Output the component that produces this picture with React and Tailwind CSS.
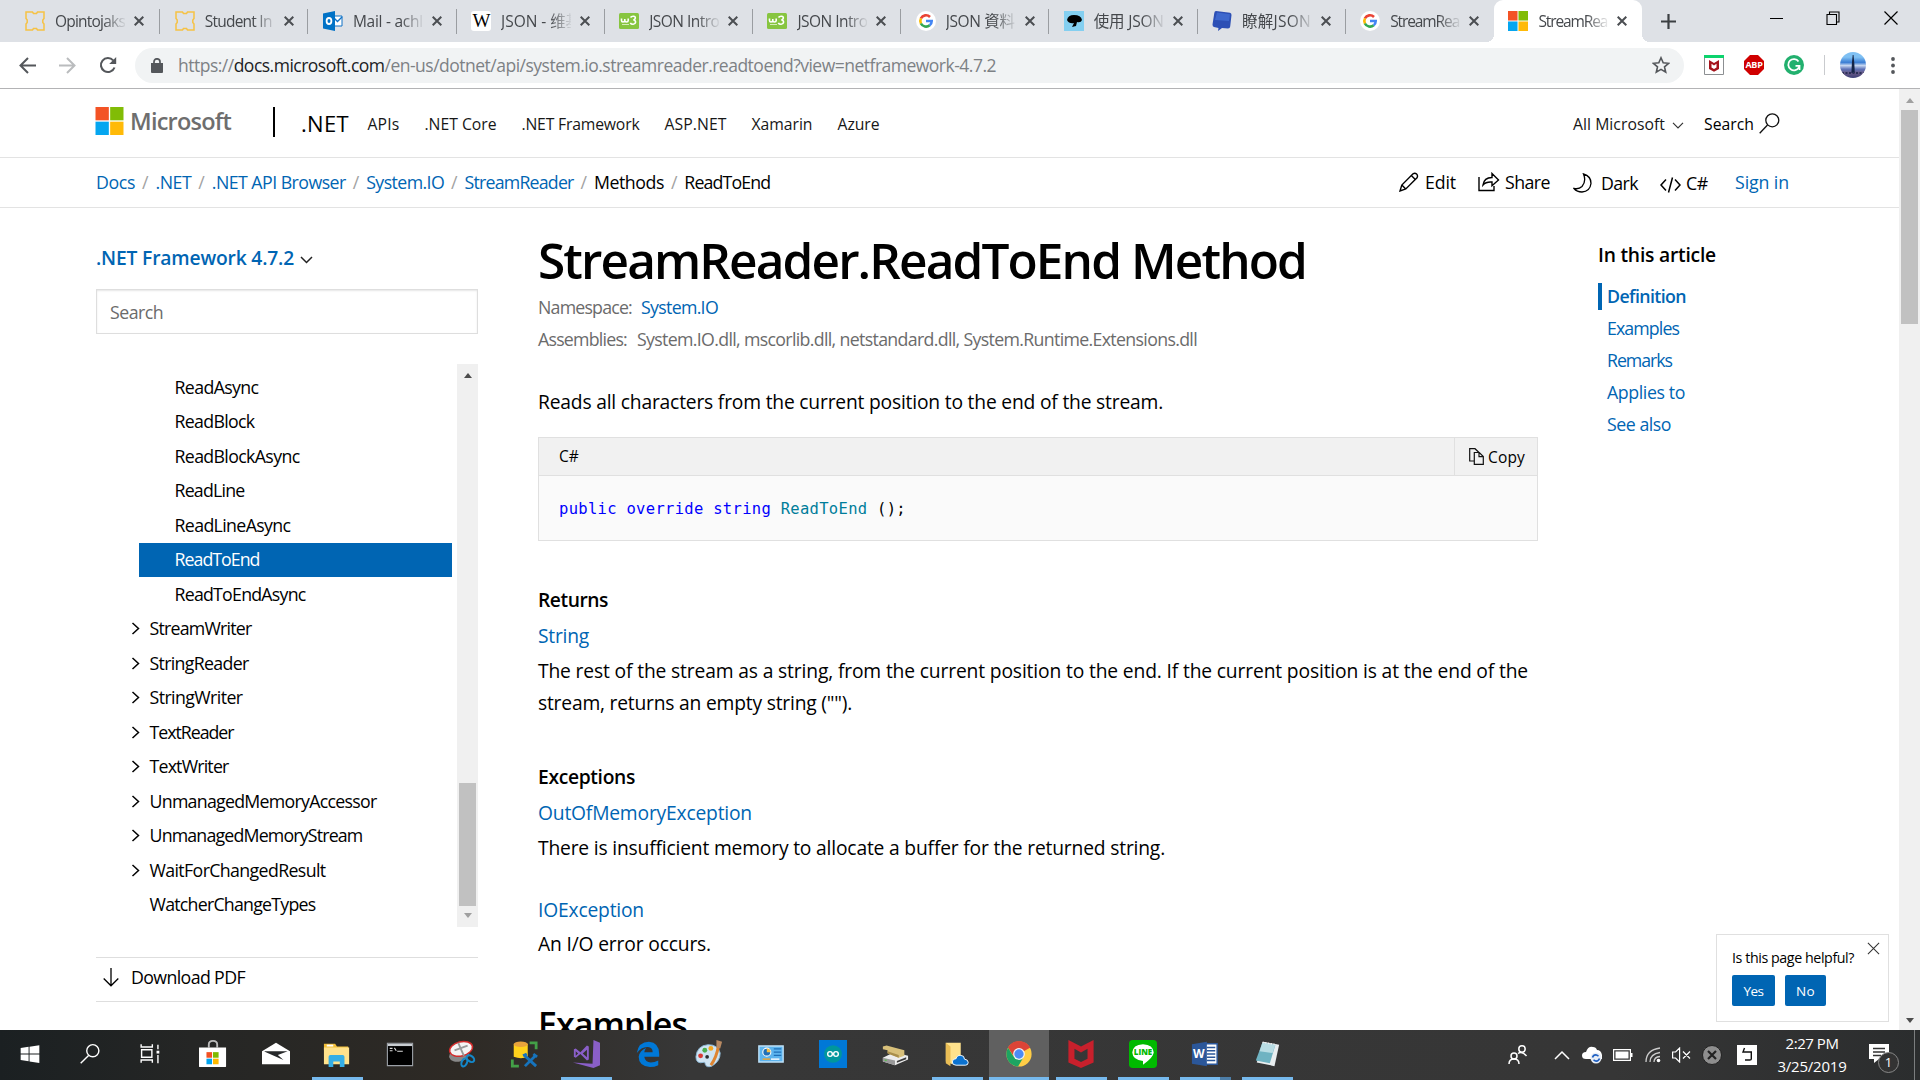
import React, { useLayoutEffect, useRef } from "react";

/* Text run spread evenly over a given width. */
function Fit({ w, className = "", children }) {
  const ref = useRef(null);
  useLayoutEffect(() => {
    const el = ref.current;
    el.style.letterSpacing = "0px";
    const natural = el.getBoundingClientRect().width;
    const n = el.textContent.length;
    el.style.letterSpacing = `${(w - natural) / n}px`;
  }, [w]);
  return (
    <span className={"block shrink-0 whitespace-pre " + className} style={{ width: w }}>
      <span ref={ref} className="inline-block whitespace-pre">{children}</span>
    </span>
  );
}

const Ico = ({ w, h = w, vb, className = "", children }) => (
  <svg width={w} height={h} viewBox={vb || `0 0 ${w} ${h}`} fill="none" className={"block shrink-0 " + className}>
    {children}
  </svg>
);

const MsLogo = ({ s, h = s }) => (
  <Ico w={s} h={h} vb="0 0 21 21" >
    <path fill="#f35325" d="M0 0h10v10H0z" />
    <path fill="#81bc06" d="M11 0h10v10H11z" />
    <path fill="#05a6f0" d="M0 11h10v10H0z" />
    <path fill="#ffba08" d="M11 11h10v10H11z" />
  </Ico>
);

const Puzzle = () => (
  <Ico w={20}>
    <path stroke="#f6c244" strokeWidth="1.5" d="M1 1h6.500l1 1.500h3l1-1.500H19v6.500L17.800 9v2.500l1.200 1.500V19h-6.500l-1-1.500h-3L7.500 19H1v-6l1.200-1.500V9L1 7.500z" />
  </Ico>
);
const Outlook = () => (
  <Ico w={20}>
    <path fill="#fff" stroke="#1072c6" d="M10 5h9v10h-9z" />
    <path stroke="#1072c6" strokeWidth="1.4" d="M11 7l3.5 3.5L19 6" />
    <path fill="#0072c6" d="M0 2.5L12 0v20L0 17.5z" />
    <ellipse cx="6" cy="10" rx="2.4" ry="3" stroke="#fff" strokeWidth="1.8" />
  </Ico>
);
const Wiki = () => (
  <span className="flex size-5 items-center justify-center rounded-[3px] bg-white font-[Liberation_Serif,serif] text-[19px] leading-5 tracking-tighter text-black">W</span>
);
const W3 = () => (
  <Ico w={20}>
    <rect y="2" width="20" height="16" rx="1.5" fill="#87c540" />
    <path stroke="#fff" strokeWidth="1.6" d="M2.5 7.5v2q0 1.5 1.5 1.5t1.8-1.5V8v1.5q0 1.500 1.700 1.500T9.200 9.500v-2M11.500 6.500q1-1.500 3-1.300t1.800 2q-.2 1.500-2 1.800q2.200 0 2.300 2.200q-.3 2-2.400 2.100t-2.900-1.500" />
    <path stroke="#d5ecb8" d="M3 13.500h7" />
  </Ico>
);
const Google = () => (
  <Ico w={20} h={20} vb="0 0 20 20">
    <circle cx="10" cy="10" r="10" fill="#fff" />
    <path stroke="#ea4335" strokeWidth="2.600" d="M4.900 7.400A5.700 5.700 0 0 1 14 6" />
    <path stroke="#fbbc05" strokeWidth="2.600" d="M5 12.700a5.700 5.700 0 0 1 0-5.400" />
    <path stroke="#34a853" strokeWidth="2.600" d="M13.700 14.300A5.700 5.700 0 0 1 4.900 12.500" />
    <path stroke="#4285f4" strokeWidth="2.600" d="M10 10h5.700q0 2.800-2 4.300" />
  </Ico>
);
const Bonsai = () => (
  <Ico w={20}>
    <path fill="#84cff0" d="M0 0h20v20H0z" />
    <path fill="#000" d="M3 9q1-5 7-5 7 0 8 5-1 3-5 2l-1 4-4 1 2-4q-5 1-7-3z" />
  </Ico>
);
const BlueCube = () => (
  <Ico w={20}>
    <path fill="#2c4fb5" d="M4 0q-1.500 0-1.700 2L.5 13.500q0 2 1.500 2.500l4.500 1L6 20l4-3 6 .500q2 0 2.200-2L19.500 4q0-2-1.500-2.300z" />
    <path fill="#4a78dd" d="M5 1.500l13 1.700L17 10 3 9z" opacity=".6" />
  </Ico>
);

const TABS = [
  [Puzzle, "Opintojaks", 70],
  [Puzzle, "Student In", 67],
  [Outlook, "Mail - achl", 70],
  [Wiki, "JSON - 维基", 80],
  [W3, "JSON Intro", 70],
  [W3, "JSON Intro", 70],
  [Google, "JSON 資料", 69],
  [Bonsai, "使用 JSON", 70],
  [BlueCube, "瞭解JSON", 69],
  [Google, "StreamRea", 69],
  [MsTab, "StreamRea", 69],
];
function MsTab() { return <MsLogo s={20} />; }

const X = ({ s = 10, c = "#4b4e52", sw = 2 }) => (
  <Ico w={s} vb="0 0 10 10"><path stroke={c} strokeWidth={sw} d="M.7.700l8.600 8.600M9.300.700L.7 9.300" /></Ico>
);

function TabStrip() {
  return (
    <div className="flex h-[42px] bg-[#dee1e6] pl-3">
      {TABS.map(([I, label, w], i) => {
        const active = i === 10;
        return (
          <div key={i} className={"relative flex h-[42px] w-[148.2px] shrink-0 items-center " + (i === 0 ? "pl-[13px] " : "pl-[14.500px] ") + (active ? "rounded-t-[9px] bg-white" : "")}>
            {active && (
              <>
                <span className="absolute bottom-0 -left-2 size-2 bg-[radial-gradient(circle_at_0_0,#dee1e6_8px,#fff_8px)]" />
                <span className="absolute bottom-0 -right-2 size-2 bg-[radial-gradient(circle_at_100%_0,#dee1e6_8px,#fff_8px)]" />
              </>
            )}
            <I />
            <div className="ml-[10px] w-[70px] overflow-hidden text-[15.500px] leading-5 text-[#45484c] [mask-image:linear-gradient(to_right,#000_48px,transparent_72px)]">
              <Fit w={w}>{label}</Fit>
            </div>
            <span className="ml-[9px]"><X /></span>
            {i < 9 && <span className="absolute top-[9px] right-0 h-[25px] w-px bg-[#9a9da1]" />}
          </div>
        );
      })}
      <div className="ml-[19px] flex h-[42px] items-center">
        <Ico w={15}><path stroke="#3c4043" strokeWidth="2.200" d="M7.500 0v15M0 7.500h15" /></Ico>
      </div>
      <div className="ml-auto flex h-9 items-center pr-[22px]">
        <span className="h-px w-[13px] bg-black" />
        <Ico w={14} className="ml-[43px]"><path stroke="#000" strokeWidth="1.100" d="M1 3.500h9.500v10H1zM3.500 3.500V1H13v10h-2.500" /></Ico>
        <Ico w={14} className="ml-[44px]"><path stroke="#000" strokeWidth="1.200" d="M.5.500l13 13M13.500.500l-13 13" /></Ico>
      </div>
    </div>
  );
}

function Toolbar() {
  return (
    <div className="flex h-[47px] items-center border-b border-[#b3b3b5] bg-white pl-[19px]">
      <Ico w={17}><path stroke="#54575b" strokeWidth="2" d="M17 8.500H2M9 1L1.500 8.500 9 16" /></Ico>
      <Ico w={17} className="ml-[23px]"><path stroke="#babcbe" strokeWidth="2" d="M0 8.500h15M8 1l7.500 7.500L8 16" /></Ico>
      <Ico w={18} className="ml-[23px]">
        <path stroke="#54575b" strokeWidth="2.100" d="M15.500 11.500A7 7 0 1 1 14.200 4.400" />
        <path fill="#54575b" d="M17.200 1v7h-7z" />
      </Ico>
      <div className="ml-[18px] flex h-[35px] w-[1549px] items-center rounded-full bg-[#f1f3f4] pl-[16px]">
        <Ico w={12} h={15}>
          <path fill="#54575b" d="M0 5h12v9q0 1-1 1H1q-1 0-1-1z" />
          <path stroke="#54575b" strokeWidth="1.700" d="M3 6V3.800a3 3 0 0 1 6 0V6" />
        </Ico>
        <Fit w={818} className="ml-[15px] text-[17.500px] leading-[34px] text-[#7d8185]">
          https://<span className="text-[#202124]">docs.microsoft.com</span>/en-us/dotnet/api/system.io.streamreader.readtoend?view=netframework-4.7.2
        </Fit>
        <Ico w={18} className="ml-auto mr-[14px]" vb="0 0 18 18">
          <path stroke="#54575b" strokeWidth="1.600" d="M9 1.800l2.200 5 5.400.5-4.100 3.600 1.200 5.300L9 13.400l-4.700 2.800 1.200-5.300L1.400 7.300l5.400-.5z" />
        </Ico>
      </div>
      <Ico w={20} className="ml-5">
        <path fill="#fff" stroke="#8c8f92" d="M.5 1v18.500h19V1z" />
        <path fill="#0cd36d" d="M0 0h20v3H0z" />
        <path fill="#a5131c" d="M5 5l5 3 5-3v9l-5 2.800L5 14zm2.500 3.800v3.800l2.500 1.500 2.500-1.500V8.800L10 10.400z" />
      </Ico>
      <div className="ml-5 flex size-5 items-center justify-center bg-[#d00000] [clip-path:polygon(30%_0,70%_0,100%_30%,100%_70%,70%_100%,30%_100%,0_70%,0_30%)]">
        <span className="text-[9px] font-bold leading-5 tracking-tight text-white">ABP</span>
      </div>
      <Ico w={20} className="ml-5">
        <circle cx="10" cy="10" r="10" fill="#22b06e" />
        <path stroke="#fff" strokeWidth="1.800" d="M14.500 6.500A5.600 5.600 0 1 0 15 12M15.500 15v-4.200h-4" />
      </Ico>
      <span className="ml-5 h-5 w-px bg-[#c9cbce]" />
      <div className="ml-[15px] size-[26px] overflow-hidden rounded-full bg-[linear-gradient(#7fc0f3_0_20%,#3a7dd4_40%,#c6d6f0_52%,#5d72b8_66%,#6a5a86_80%,#3b3f78)]">
        <Ico w={26}><path fill="#142447" d="M12.700 3h.8l.8 8 .5 10h-3.400l.5-10z" /><path stroke="#2b3158" strokeWidth="2" strokeDasharray="2 1.500" d="M2 21h22" /></Ico>
      </div>
      <Ico w={4} h={17} className="ml-[25px]"><g fill="#54575b"><circle cx="2" cy="2" r="1.900" /><circle cx="2" cy="8.500" r="1.900" /><circle cx="2" cy="15" r="1.900" /></g></Ico>
    </div>
  );
}

const NAV = [["APIs", 32], [".NET Core", 72], [".NET Framework", 118], ["ASP.NET", 62], ["Xamarin", 61], ["Azure", 42]];

function SiteHeader() {
  return (
    <div className="flex h-[69px] border-b border-[#e3e3e3] pl-[95px] text-[15.750px] leading-[70px] text-[#171717]">
      <div className="mt-[18px] flex h-7">
        <MsLogo s={29} h={28} />
        <Fit w={101} className="ml-[6px] text-[23.500px] font-semibold leading-[28px] text-[#6e6e6e]">Microsoft</Fit>
        <span className="ml-[42px] h-[30px] w-[2px] bg-black" />
      </div>
      <Fit w={48} className="ml-[26px] text-[22px] font-medium leading-[68px] text-black">.NET</Fit>
      <div className="ml-[18.500px] flex gap-[25px]">
        {NAV.map(([t, w]) => <Fit key={t} w={w}>{t}</Fit>)}
      </div>
      <div className="ml-auto flex w-[326px]">
        <Fit w={92}>All Microsoft</Fit>
        <Ico w={12} h={7} className="mt-[33px] ml-[7px]"><path stroke="#333" strokeWidth="1.200" d="M1 .800l5 5 5-5" /></Ico>
        <Fit w={50} className="ml-[20px] text-black">Search</Fit>
        <Ico w={21} className="mt-[24px] ml-[5px]"><circle cx="13.300" cy="7.300" r="6.500" stroke="#111" strokeWidth="1.300" /><path stroke="#111" strokeWidth="1.300" d="M8.500 12L.7 20.300" /></Ico>
      </div>
    </div>
  );
}

const CRUMBS = [["Docs", 39], [".NET", 36], [".NET API Browser", 134], ["System.IO", 78], ["StreamReader", 109], ["Methods", 70], ["ReadToEnd", 86]];

function Crumbs() {
  return (
    <div className="flex h-[50px] border-b border-[#e3e3e3] pl-[96px] text-[17.750px] leading-[48px] text-black">
      {CRUMBS.map(([t, w], i) => (
        <React.Fragment key={t}>
          {i > 0 && <span className="w-[20.4px] text-center text-[#a2a2a2]">/</span>}
          <Fit w={w} className={i < 5 ? "text-[#0065b3]" : ""}>{t}</Fit>
        </React.Fragment>
      ))}
      <div className="ml-auto flex w-[500px]">
        <Ico w={20} className="mt-[14px]" vb="0 0 20 20"><path stroke="#000" strokeWidth="1.400" d="M1 19l1.800-6L14 1.800q2-1.300 3.600.3t.4 3.700L6.800 17zM2.800 13l4 4M12.300 3.500l4 4" /></Ico>
        <Fit w={31} className="ml-[6px]">Edit</Fit>
        <Ico w={22} h={20} className="mt-[14px] ml-[22px]"><path stroke="#000" strokeWidth="1.400" d="M1 5v13.500h15V14M5 13q1-7.500 9-7.500V1.500L20.500 8 14 13.800V10q-6-.5-9 3z" /></Ico>
        <Fit w={45} className="ml-[5px]">Share</Fit>
        <Ico w={19} h={20} className="mt-[15px] ml-[23px]"><path stroke="#000" strokeWidth="1.300" d="M10.500 1q7.500 2 7.500 9.500-1 8-9 8.500-5 0-8-3.500 5 1 8-2 4.500-5 1.500-12.500z" /></Ico>
        <Fit w={37} className="ml-[9px] leading-[50px]">Dark</Fit>
        <Ico w={21} h={16} className="mt-[19px] ml-[22px]"><path stroke="#000" strokeWidth="1.500" d="M6 2.500L1 8l5 5.500M15 2.500L20 8l-5 5.500M12.500.500l-4 15" /></Ico>
        <Fit w={22} className="ml-[5px] leading-[51px]">C#</Fit>
        <Fit w={54} className="ml-[27px] text-[#0065b3]">Sign in</Fit>
      </div>
    </div>
  );
}

const MEMBERS = [["ReadAsync", 84], ["ReadBlock", 80], ["ReadBlockAsync", 125], ["ReadLine", 70], ["ReadLineAsync", 116], ["ReadToEnd", 85], ["ReadToEndAsync", 131]];
const TYPES = [["StreamWriter", 102], ["StringReader", 99], ["StringWriter", 93], ["TextReader", 84], ["TextWriter", 79], ["UnmanagedMemoryAccessor", 227], ["UnmanagedMemoryStream", 213], ["WaitForChangedResult", 176], ["WatcherChangeTypes", 166]];

function Sidebar() {
  return (
    <div className="w-[382px] shrink-0 text-[17.750px]">
      <div className="mt-[34px] flex h-8 leading-8">
        <Fit w={198} className="text-[19.250px] font-semibold text-[#0065b3]">.NET Framework 4.7.2</Fit>
        <Ico w={13} h={8} className="mt-[14px] ml-[6px]"><path stroke="#222" strokeWidth="1.500" d="M1 1l5.500 5.500L12 1" /></Ico>
      </div>
      <div className="mt-[15px] flex h-[45px] items-center border border-[#dedede] pt-[2px] pl-[13px] text-[#6b6b6b] shadow-[inset_0_1px_2px_rgba(10,10,10,0.1)]">
        <Fit w={53}>Search</Fit>
      </div>
      <div className="mt-[30px] flex h-[563px]">
        <div className="flex-1 pt-[6px] text-black">
          {MEMBERS.map(([t, w], i) => (
            <div key={t} className={"mr-[5px] ml-[43px] flex h-[34.500px] items-center pl-[35.500px] " + (i === 5 ? "bg-[#0065b3] text-white" : "")}>
              <Fit w={w}>{t}</Fit>
            </div>
          ))}
          {TYPES.map(([t, w], i) => (
            <div key={t} className="flex h-[34.500px] items-center pl-[35px]">
              {i < 8 ? <Ico w={9} h={13}><path stroke="#000" strokeWidth="1.500" d="M1.500 1l6 5.500-6 5.500" /></Ico> : <span className="w-[9px]" />}
              <Fit w={w} className="ml-[9.500px]">{t}</Fit>
            </div>
          ))}
        </div>
        <div className="flex w-[21px] flex-col items-center bg-[#f0f0f0]">
          <span className="mt-[9px] border-x-[4.500px] border-b-[5px] border-x-transparent border-b-[#4d4d4d]" />
          <span className="mt-[405px] h-[123px] w-[17px] bg-[#c1c1c1]" />
          <span className="mt-[7px] border-x-[4.500px] border-t-[5px] border-x-transparent border-t-[#a0a0a0]" />
        </div>
      </div>
      <div className="mt-[30px] flex h-[45px] border-y border-[#dedede] pl-[7px] leading-[39px] text-black">
        <Ico w={16} h={19} className="mt-[10px]"><path stroke="#000" strokeWidth="1.300" d="M8 0v17.500M.7 10.500L8 17.800l7.300-7.300" /></Ico>
        <Fit w={114} className="ml-[12px]">Download PDF</Fit>
      </div>
    </div>
  );
}

function Article() {
  return (
    <div className="ml-[60px] w-[1000px] shrink-0 text-[19.250px] leading-8 text-black">
      <Fit w={768} className="mt-5 h-[63px] text-[49.500px] font-semibold leading-[64px]">StreamReader.ReadToEnd Method</Fit>
      <div className="flex h-8 text-[17.750px] text-[#6b6b6b]">
        <Fit w={94}>Namespace:</Fit>
        <Fit w={77} className="ml-[9px] text-[#0065b3]">System.IO</Fit>
      </div>
      <div className="flex h-8 text-[17.750px] text-[#6b6b6b]">
        <Fit w={89}>Assemblies:</Fit>
        <Fit w={560} className="ml-[10px]">System.IO.dll, mscorlib.dll, netstandard.dll, System.Runtime.Extensions.dll</Fit>
      </div>
      <Fit w={625} className="mt-[31px]">Reads all characters from the current position to the end of the stream.</Fit>
      <div className="mt-[19px] h-[104px] border border-[#e0e0e0] bg-[#fafafa]">
        <div className="flex h-[38px] border-b border-[#e0e0e0] bg-[#f1f1f1] pl-[20px] text-[15.500px] leading-[37px]">
          <Fit w={20}>C#</Fit>
          <div className="ml-auto flex w-[83px] border-l border-[#e0e0e0] pl-[14px]">
            <Ico w={15} h={17} className="mt-[10px]"><path stroke="#111" strokeWidth="1.200" d="M5 13H.700V.700H6L10 4.500M5.300 4.500h5l4 4v7.800h-9zM10 4.700v4h4" /></Ico>
            <Fit w={37} className="ml-[4px] leading-[38px]">Copy</Fit>
          </div>
        </div>
        <Fit w={347} className="pt-[17px] pl-[20px] font-['DejaVu_Sans_Mono',monospace] text-[15.500px] leading-8">
          <span className="text-[#0101fd]">public</span> <span className="text-[#0101fd]">override</span> <span className="text-[#0101fd]">string</span> <span className="text-[#007d9a]">ReadToEnd</span> ();
        </Fit>
      </div>
      <Fit w={70} className="mt-[43px] font-semibold">Returns</Fit>
      <Fit w={51} className="mt-1 text-[#0065b3]">String</Fit>
      <Fit w={990} className="mt-[3px]">The rest of the stream as a string, from the current position to the end. If the current position is at the end of the</Fit>
      <Fit w={314}>stream, returns an empty string ("").</Fit>
      <Fit w={97} className="mt-[42px] font-semibold">Exceptions</Fit>
      <Fit w={214} className="mt-1 text-[#0065b3]">OutOfMemoryException</Fit>
      <Fit w={627} className="mt-[3px]">There is insufficient memory to allocate a buffer for the returned string.</Fit>
      <Fit w={106} className="mt-[30px] text-[#0065b3]">IOException</Fit>
      <Fit w={173} className="mt-[2px]">An I/O error occurs.</Fit>
      <Fit w={149} className="mt-[42px] text-[34px] font-semibold leading-[44px]">Examples</Fit>
    </div>
  );
}

const TOC = [["Definition", 79], ["Examples", 72], ["Remarks", 65], ["Applies to", 78], ["See also", 64]];

function Toc() {
  return (
    <div className="ml-[60px] pt-[31px] text-[17.750px]">
      <Fit w={118} className="text-[19.250px] font-semibold leading-8 text-black">In this article</Fit>
      <div className="mt-[9px] text-[#0065b3]">
        {TOC.map(([t, w], i) => (
          <div key={t} className="flex h-8 items-center">
            <span className={"h-[27px] w-1 " + (i === 0 ? "bg-[#0065b3]" : "")} />
            <Fit w={w} className={"ml-[5px] leading-8 " + (i === 0 ? "font-semibold" : "")}>{t}</Fit>
          </div>
        ))}
      </div>
    </div>
  );
}

function Helpful() {
  return (
    <div className="absolute right-[10px] bottom-[8px] h-[88px] w-[173px] border border-[#e0e0e0] bg-white pl-[15px] text-[14.250px] text-black">
      <span className="absolute top-[7px] right-2"><X s={13} c="#333" sw={0.8} /></span>
      <Fit w={122} className="mt-[11px] leading-[24px]">Is this page helpful?</Fit>
      <div className="mt-[5px] flex gap-[10px] text-[13.500px] leading-[32px] text-white">
        <span className="flex h-[31px] w-[43px] justify-center rounded-[2px] bg-[#0065b3]"><Fit w={20}>Yes</Fit></span>
        <span className="flex h-[31px] w-[41px] justify-center rounded-[2px] bg-[#0065b3]"><Fit w={19}>No</Fit></span>
      </div>
    </div>
  );
}

/* Task bar programs: running state and a drawing on a 30 x 30 box. */
const APPS = [
  ["", <path fill="#fff" d="M5 8.500l8.500-1.200v7.200H5zM14.500 7.100L25 5.500v9H14.500zM5 15.500h8.500v7.200L5 21.500zM14.500 15.500H25v9.200l-10.500-1.600z" />],
  ["", <g stroke="#fff" strokeWidth="1.500"><circle cx="18" cy="11.500" r="6.500" /><path d="M13.500 16.500L5 25" /></g>],
  ["", <g stroke="#fff" strokeWidth="1.500"><path d="M5.500 4.500v3h12v-3M5.500 24.500v-3h12v3M6 10.500h11v8H6zM23.500 5v5M23.500 16v9" /><path fill="#fff" strokeWidth="0" d="M22 11.500h3v3h-3z" /></g>],
  ["", <g><path stroke="#bbb" strokeWidth="2" d="M10.500 8V5q0-4 4.500-4t4.500 4v3" /><path fill="#fff" d="M0 8h29v20q0 1-1 1H1q-1 0-1-1z" /><path fill="#f25022" d="M8 13h6v6H8z" /><path fill="#7fba00" d="M15 13h6v6h-6z" /><path fill="#00a4ef" d="M8 20h6v6H8z" /><path fill="#ffb900" d="M15 20h6v6h-6z" /></g>],
  ["", <g><path fill="#fff" d="M0 12L15 3l15 9v14H0z" /><path fill="#26282a" d="M2.500 12h25L17 16l6 5.500L3 12.500z" /></g>],
  ["run", <g><path fill="#f3bf38" d="M1 4h12l2 3h12v4H1z" /><path fill="#fff" d="M4 5h7v2H4z" /><path fill="#ffe28c" d="M1 8h27v18H1z" /><path fill="#35aee6" d="M6 18q0-2 2-2h13q2 0 2 2v11h-5v-6h-7v6H6z" /></g>],
  ["", <g><path fill="#000" stroke="#9ba0a6" strokeWidth="1.200" d="M1.500 3.500h27v24h-27z" /><path fill="#c8ccd0" d="M2 4h26v2.500H2z" /><path stroke="#ddd" strokeWidth="1.200" d="M4 9h3M4 11.500h3M9 8.500l2 3M12 12h6" /></g>],
  ["", <g><ellipse cx="12" cy="16" rx="11" ry="7" fill="#888" transform="rotate(-15 12 16)" /><ellipse cx="14" cy="9.500" rx="12.500" ry="7.500" fill="#f4f4f4" stroke="#d22b2b" strokeWidth="1.600" transform="rotate(-14 14 9.500)" /><path stroke="#999" strokeWidth="2" d="M11 3l6 14M7 11l14-5" /><g stroke="#1487c9" strokeWidth="2.200"><ellipse cx="24" cy="20" rx="4.500" ry="3" transform="rotate(35 24 20)" /><ellipse cx="17.500" cy="24" rx="2.800" ry="4.500" transform="rotate(25 17.500 24)" /></g></g>],
  ["", <g><path fill="#ffd21c" d="M4 4h15v14q-7 3-15 0z" /><ellipse cx="11.500" cy="4.500" rx="7.500" ry="3" fill="#e8a33c" /><path stroke="#43a047" strokeWidth="3" d="M21 3h7v7M2.500 21v7h7" /><path stroke="#1774bd" strokeWidth="3" d="M16 28l12-12M16 17l12 11M14 17l4-2M25 15l4 3" /></g>],
  ["run", <g fill="#8a5fc8"><path d="M23 0l7 3v24l-7 3L1 24l21 1.500z" /><path d="M2 10l2-1 5 4 7-7 2 1v14l-2 1-7-7-5 4-2-1zm2 2v5l2.500-2.500zm12-1.500L11.500 14.500 16 18.500z" fillRule="evenodd" /></g>],
  ["", <path fill="#0078d7" d="M3 14Q5 2 16 2q11 1 11 13v3H11q1 6 7 6 4 0 8-2v5q-4 2-9 2Q5 28 5 18q1-7 8-9.500Q11 11 11 13h9q0-5-5-5.500Q8 7 3 14z" />],
  ["", <g><path fill="#cfe4f3" stroke="#8db8d6" d="M1 18Q2 6 14 5q11 0 13 9 0 9-9 14-6 2-7-2 0-3-2-2-8 2-8-6z" /><circle cx="6" cy="17" r="2.600" fill="#d83a34" /><circle cx="10.500" cy="11" r="2.600" fill="#4cae4f" /><circle cx="17" cy="9" r="2.600" fill="#f6a821" /><circle cx="13" cy="18" r="2" fill="#2b2f33" /><path stroke="#de8532" strokeWidth="3.200" d="M25 7q-2 12-8 20" /><path fill="#b98a62" d="M23 0l6 2-2 7-4-1z" /></g>],
  ["", <g><path fill="#5cb4ee" stroke="#bfe2fa" strokeWidth="1.500" d="M2 6.500h26v17H2z" /><circle cx="10.500" cy="13" r="4.300" fill="#1f6fb8" stroke="#fff" strokeWidth="1.200" /><path fill="#f6c04a" d="M10.500 13V9a4 4 0 0 1 4 4z" /><path stroke="#1f6fb8" strokeWidth="1.500" d="M18 9.500h8M18 13h8M18 16.500h8" /><path stroke="#f3a52c" strokeWidth="1.500" d="M6 20.500h8" /><path stroke="#fff" strokeWidth="1.500" d="M15 20.500h9" /></g>],
  ["", <g><path fill="#0078d7" d="M-1 -1h32v32H-1z" /><circle cx="15" cy="15" r="9.500" fill="#00979d" /><g stroke="#fff" strokeWidth="1.500"><circle cx="11.800" cy="15" r="2.500" /><circle cx="18.200" cy="15" r="2.500" /></g></g>],
  ["", <g><path fill="#ededed" d="M2 19l12-6 15 4v4l-14 6-13-4z" /><path fill="#9a9a9a" d="M2 19l13 3v5L2 23z" /><path fill="#3b3b3b" d="M17 22.500l10-4v2l-10 4z" /><path fill="#58c24f" d="M4 21h2v1.500H4z" /><path fill="#d8c07a" d="M2 7l4-1 19 5v6l-6 2L7 14V11L2 10z" /><path fill="#a98e4b" d="M7 12l12 4v3L7 14.500z" /></g>],
  ["run", <g><path fill="#ffe28c" d="M3 3h16v20l-9 3-7-3z" /><path fill="#e9bd55" d="M3 3l5 4v21l-5-3z" /><path fill="#0b72d0" stroke="#fff" strokeWidth="1" d="M14 27q-4 0-4-3.500t4-3.500q1-4 5-3.500 4 0 4 4 4 .500 4 3.500t-3 3z" /></g>],
  ["active", <g><circle cx="15" cy="15" r="13.500" fill="#ffcd46" /><path fill="#dc4437" d="M15 15L3.300 8.200A13.500 13.500 0 0 1 26.700 8.200z" /><path fill="#dc4437" d="M15 8.500h12a13.500 13.500 0 0 0-23.700-.3l6 9z" /><path fill="#1da462" d="M3.300 8.200A13.500 13.500 0 0 0 14 28.500L19.500 19 9 17.500z" /><circle cx="15" cy="15" r="6.300" fill="#f4f4f4" /><circle cx="15" cy="15" r="5" fill="#4c8bf5" /></g>],
  ["run", <path fill="#c8202c" d="M1.500 0L15 7 28.500 0v24L15 30 1.500 24zM8 9.500V20l7 3.500 7-3.500V9.500l-7 4z" fillRule="evenodd" />],
  ["run", <g><rect width="30" height="30" rx="4" fill="#00b900" /><path fill="#fff" d="M15 4.500q11 .500 11.500 9Q26 19 15 26.500v-4Q4 21.500 3.500 13.500 4 5 15 4.500z" /></g>],
  ["word", <g><path fill="#fff" stroke="#2b579a" strokeWidth="1.500" d="M15 4h13v22H15z" /><path stroke="#2b579a" strokeWidth="1.600" d="M17 8h9M17 11.500h9M17 15h9M17 18.500h9M17 22h9" /><path fill="#2b579a" d="M1 4.500L17 2v26L1 25.500z" /></g>],
  ["run", <g><path fill="#e9eef0" d="M11 2l17 3-5 23-19-4z" /><path fill="#6fb3c2" d="M10 3l14 2-6 20-15-3z" /><path fill="#b9dde4" d="M10 3l14 2-3 9L7 12z" /><path stroke="#eee" strokeWidth="1.500" strokeDasharray="1.500 1.500" d="M10 2.500l15 2.500" /></g>],
];
const WIDTHS = [60, 60, 60, 66.5, 59, 63.5, 61, 63, 62, 62, 61, 62, 62, 62, 62, 62, 62, 62, 62, 62, 62];

function TaskBar() {
  return (
    <div className="flex h-[50px] bg-[linear-gradient(to_right,#1b2022_0,#252625_10%,#2e2a25_24%,#373737_36%,#363636_84%,#2b2d2e_100%)]">
      {APPS.map(([state, art], i) => (
        <div key={i} className="flex h-[50px] flex-col items-center justify-between" style={{ width: WIDTHS[i] }}>
          <div className={"flex h-[47px] items-center justify-center pt-[1px] " + (state === "active" ? "w-[60px] bg-[#606060]" : "w-[51px]")}>
            <div className="relative">
              <Ico w={28} vb="0 0 30 30">{art}</Ico>
              {i === 18 && <span className="absolute inset-0 top-[-2px] text-center text-[8px] font-extrabold leading-[28px] text-[#00b900]">LINE</span>}
              {i === 19 && <span className="absolute top-0 left-[2px] text-[12px] font-bold leading-[28px] text-white">W</span>}
            </div>
          </div>
          {state && (
            <div className={"flex h-[3px] justify-end bg-[#76b9ed] " + (state === "active" ? "w-[60px]" : "w-[51px]")}>
              {state === "word" && <span className="w-[11px] bg-[#4d7ea8]" />}
            </div>
          )}
        </div>
      ))}
      <div className="ml-auto flex items-center text-white">
        <Ico w={20}><g stroke="#fff" strokeWidth="1.500"><circle cx="14" cy="4" r="3.200" /><circle cx="6" cy="11" r="3" /><path d="M1 19q0-5 5-5t5 5M10 8.500q4-3 8.500 2.500" /></g></Ico>
        <Ico w={16} h={10} className="ml-[26px]"><path stroke="#fff" strokeWidth="1.500" d="M1 9l7-7 7 7" /></Ico>
        <Ico w={21} h={18} className="ml-[12px]"><path fill="#fff" d="M4 13q-4 0-4-3.500T4 6q2-6 7-5 3 0 4 3 4 0 5 5v4z" /><circle cx="14" cy="12" r="5.500" fill="#e8eef6" /><path stroke="#1e5fc2" strokeWidth="1.600" d="M10.500 11.500q1-3 4-2.500l2 1M17.500 12.500q-1 3-4 2.500l-2-1" /></Ico>
        <Ico w={20} h={12} className="ml-[10px]"><path stroke="#fff" strokeWidth="1.200" d="M.600.600h16.800v10.800H.600z" /><path fill="#fff" d="M2.500 2.500h13v7h-13zM18 4h1.500v4H18z" /></Ico>
        <Ico w={17} h={16} className="ml-[12px]"><g stroke="#ccc" strokeWidth="1.300"><path d="M1 15Q1 3 15 1M5 15Q5 7 15 5.500M9 15q0-5 6-5.500" /></g><circle cx="13.500" cy="13.500" r="1.800" fill="#fff" /></Ico>
        <Ico w={19} h={16} className="ml-[10px]"><path stroke="#fff" strokeWidth="1.200" d="M.600 5h3l4-4v14l-4-4h-3zM11 4.500l7 7M18 4.500l-7 7" /></Ico>
        <Ico w={20} className="ml-[11px]"><circle cx="10" cy="10" r="9.500" fill="#8e8e8e" stroke="#222" /><path stroke="#222" strokeWidth="2.200" d="M6 6l8 8M14 6l-8 8" /></Ico>
        <Ico w={20} className="ml-[15px]"><path fill="#fff" d="M0 0h20v20H0z" /><path stroke="#111" strokeWidth="1.400" d="M7.500 3L6 7h8.300v7q0 1-1.500 1H8" /></Ico>
        <div className="ml-[20px] flex w-[70px] flex-col items-center text-[15px] leading-[23px]">
          <Fit w={53}>2:27 PM</Fit>
          <Fit w={69}>3/25/2019</Fit>
        </div>
        <div className="relative ml-[22px] w-[31px]">
          <Ico w={21} h={20} className="-mt-[2px]"><path fill="#fff" d="M0 0h20v15H10l-5 4v-4H0z" /><path stroke="#333" strokeWidth="1.300" d="M4 4.500h12M4 8h12M4 11.500h8" /></Ico>
          <span className="absolute top-[6px] left-[9px] flex size-[21px] items-center justify-center rounded-full border border-[#888] bg-[#333] text-[13px]">1</span>
        </div>
        <span className="ml-[14px] h-[50px] w-px bg-[#7b7d7e]" />
        <span className="w-[5px]" />
      </div>
    </div>
  );
}

export default function App() {
  return (
    <div className="flex h-[1080px] w-[1920px] flex-col overflow-hidden bg-white font-['Open_Sans','Noto_Sans_CJK_SC',sans-serif]">
      <TabStrip />
      <Toolbar />
      <div className="flex h-[941px] shrink-0">
        <div className="relative h-[941px] w-[1899px] overflow-hidden">
          <SiteHeader />
          <Crumbs />
          <div className="flex pl-[96px]">
            <Sidebar />
            <Article />
            <Toc />
          </div>
          <Helpful />
        </div>
        <div className="flex w-[21px] flex-col items-center bg-[#f0f0f0]">
          <span className="mt-[9px] border-x-[4.500px] border-b-[5px] border-x-transparent border-b-[#a0a0a0]" />
          <span className="mt-[7px] h-[214px] w-[17px] bg-[#c1c1c1]" />
          <span className="mt-auto mb-[7px] border-x-[4.500px] border-t-[5px] border-x-transparent border-t-[#4d4d4d]" />
        </div>
      </div>
      <TaskBar />
    </div>
  );
}
